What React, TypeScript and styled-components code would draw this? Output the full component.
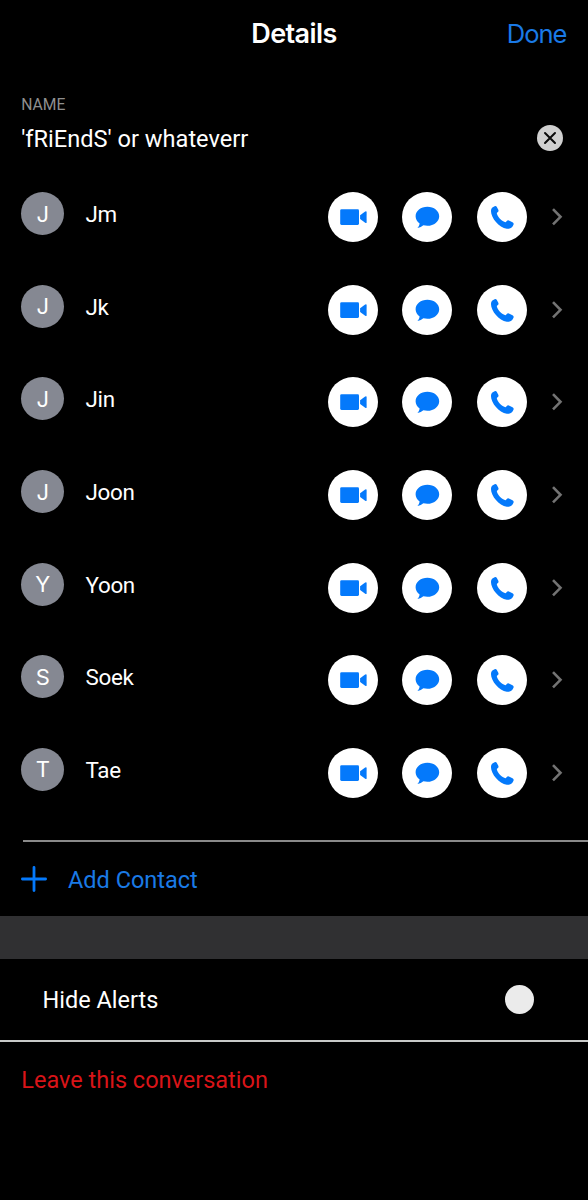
import React from 'react';
import styled, { createGlobalStyle } from 'styled-components';

const BLUE = '#0479fb';
const LINK = '#1a7ae6';

const GlobalStyle = createGlobalStyle`
  * { box-sizing: border-box; }
  body { margin: 0; background: #000; }
  svg { display: block; flex: none; }
  button { padding: 0; border: 0; background: none; font: inherit; color: inherit; }
`;

const Screen = styled.main`
  display: flex;
  flex-direction: column;
  width: 588px;
  height: 1200px;
  overflow: hidden;
  background: #000;
  color: #fff;
  font-family: Roboto, sans-serif;
  font-size: 23.5px;
`;

const Header = styled.header`
  display: grid;
  grid-template-columns: 1fr auto 1fr;
  align-items: center;
  height: 66px;
  padding: 0 21.5px;
  font-family: Inter, sans-serif;
`;

const Title = styled.h1`
  grid-column: 2;
  margin: 0;
  font-size: 27px;
  font-weight: 600;
  letter-spacing: -0.6px;
`;

const Done = styled.button`
  && {
    justify-self: end;
    color: ${LINK};
    font-size: 25.5px;
    letter-spacing: -1px;
  }
`;

const NameField = styled.section`
  height: 126.3px;
  padding: 29px 25.4px 0 21.2px;
`;

const FieldLabel = styled.div`
  color: #8f8f8f;
  font-size: 15.7px;
  line-height: 20px;
`;

const FieldRow = styled.div`
  display: flex;
  align-items: center;
  justify-content: space-between;
  height: 46px;
`;

const FieldValue = styled.span`
  padding-top: 2px;
  font-size: 23.6px;
  line-height: 29px;
`;

const Contacts = styled.ul`
  height: 648px;
  margin: 0;
  padding: 0;
  list-style: none;
`;

const Contact = styled.li`
  display: flex;
  align-items: flex-start;
  height: 92.6px;
  padding: 0 25px 0 21.3px;
`;

const Avatar = styled.div`
  display: grid;
  place-items: center;
  width: 43px;
  height: 43px;
  border-radius: 50%;
  background: #858892;
  font-family: Inter, sans-serif;
  font-size: 22px;
`;

const ContactName = styled.div`
  flex: 1;
  padding-left: 21.2px;
  font-size: 22.4px;
  letter-spacing: -0.3px;
  line-height: 45px;
`;

const Actions = styled.div`
  display: flex;
  align-items: center;
  gap: 24.5px;
`;

const Action = styled.button`
  && {
    display: grid;
    place-items: center;
    width: 50px;
    height: 50px;
    border-radius: 50%;
    background: #fff;
    color: ${BLUE};
  }
`;

const AddSection = styled.section`
  height: 75.7px;
  padding-left: 22.7px;
`;

const Rule = styled.hr`
  height: 2px;
  margin: 0;
  border: 0;
  background: #8a8a8a;
`;

const AddContact = styled.button`
  && {
    display: flex;
    align-items: center;
    gap: 21px;
    height: 73px;
    margin-left: -1.7px;
    color: ${LINK};
  }
`;

const AddLabel = styled.span`
  padding-top: 3px;
`;

const Divider = styled.div`
  height: 43px;
  background: #303032;
`;

const AlertsRow = styled.section`
  display: flex;
  align-items: center;
  justify-content: space-between;
  height: 83px;
  padding: 0 54px 0 42.5px;
  border-bottom: 2px solid #c8cac9;
`;

const AlertsLabel = styled.span`
  padding-top: 2px;
`;

const Knob = styled.button`
  && {
    width: 29px;
    height: 29px;
    border-radius: 50%;
    background: #ebebeb;
  }
`;

const Leave = styled.button`
  && {
    padding: 24px 21.3px;
    color: #d91418;
    line-height: 28px;
    text-align: left;
  }
`;

const VideoIcon = () => (
  <svg width="50" height="50" viewBox="0 0 50 50" fill="currentColor">
    <rect x="12.2" y="17.3" width="18.8" height="15.6" rx="1.3" />
    <path d="M32.1 23.2 37.2 19.5Q38.6 18.6 38.6 20V30.2Q38.6 31.6 37.2 30.7L32.1 27Z" />
  </svg>
);

const MessageIcon = () => (
  <svg width="50" height="50" viewBox="0 0 50 50" fill="currentColor">
    <path d="M25.4 14.8C18.8 14.8 13.6 19 13.6 24.2C13.6 27.1 15.1 29.7 17.6 31.4C17.4 33.1 16.7 34.6 15.4 35.9C17.9 35.6 20 34.5 21.4 33.3C22.6 33.6 24 33.8 25.4 33.8C32 33.8 37.2 29.5 37.2 24.2C37.2 19 32 14.8 25.4 14.8Z" />
  </svg>
);

const PhoneIcon = () => (
  <svg width="50" height="50" viewBox="0 0 50 50" fill="currentColor">
    <path d="M15.4 15.6L17.6 14.2Q18.9 13.5 19.7 14.8L21.3 17.8Q21.9 19.1 20.9 20L19.8 21.1C20 24.6 25 29.6 28.7 30.3L29.8 29Q30.7 28 31.9 28.5L35.5 30.2Q37.1 31 36.5 32.7C35.3 35.8 33 37.2 29.8 36.8C22 35.6 14 25.8 14 19.2C14 17.6 14.4 16.4 15.4 15.6Z" />
  </svg>
);

const ChevronIcon = () => (
  <svg width="12" height="50" viewBox="0 0 12 50" fill="none" stroke="#737373" strokeWidth="2.6">
    <path d="M2 17.2 9.5 24.8 2 32.4" />
  </svg>
);

const ClearIcon = () => (
  <svg width="26" height="26" viewBox="0 0 26 26">
    <circle cx="13" cy="13" r="13" fill="#d0d0d0" />
    <path d="M8 8 18 18M18 8 8 18" stroke="#0a0a0a" strokeWidth="2" strokeLinecap="round" />
  </svg>
);

const PlusIcon = () => (
  <svg width="26" height="26" viewBox="0 0 26 26" stroke={BLUE} strokeWidth="2.8" strokeLinecap="round">
    <path d="M13 1.4V24.6M1.4 13H24.6" />
  </svg>
);

const names = ['Jm', 'Jk', 'Jin', 'Joon', 'Yoon', 'Soek', 'Tae'];

export default function App() {
  return (
    <Screen>
      <GlobalStyle />
      <Header>
        <Title>Details</Title>
        <Done>Done</Done>
      </Header>
      <NameField>
        <FieldLabel>NAME</FieldLabel>
        <FieldRow>
          <FieldValue>'fRiEndS' or whateverr</FieldValue>
          <ClearIcon />
        </FieldRow>
      </NameField>
      <Contacts>
        {names.map((name) => (
          <Contact key={name}>
            <Avatar>{name[0]}</Avatar>
            <ContactName>{name}</ContactName>
            <Actions>
              <Action aria-label="Video call"><VideoIcon /></Action>
              <Action aria-label="Message"><MessageIcon /></Action>
              <Action aria-label="Call"><PhoneIcon /></Action>
              <ChevronIcon />
            </Actions>
          </Contact>
        ))}
      </Contacts>
      <AddSection>
        <Rule />
        <AddContact>
          <PlusIcon />
          <AddLabel>Add Contact</AddLabel>
        </AddContact>
      </AddSection>
      <Divider />
      <AlertsRow>
        <AlertsLabel>Hide Alerts</AlertsLabel>
        <Knob aria-label="Hide Alerts" />
      </AlertsRow>
      <Leave>Leave this conversation</Leave>
    </Screen>
  );
}
